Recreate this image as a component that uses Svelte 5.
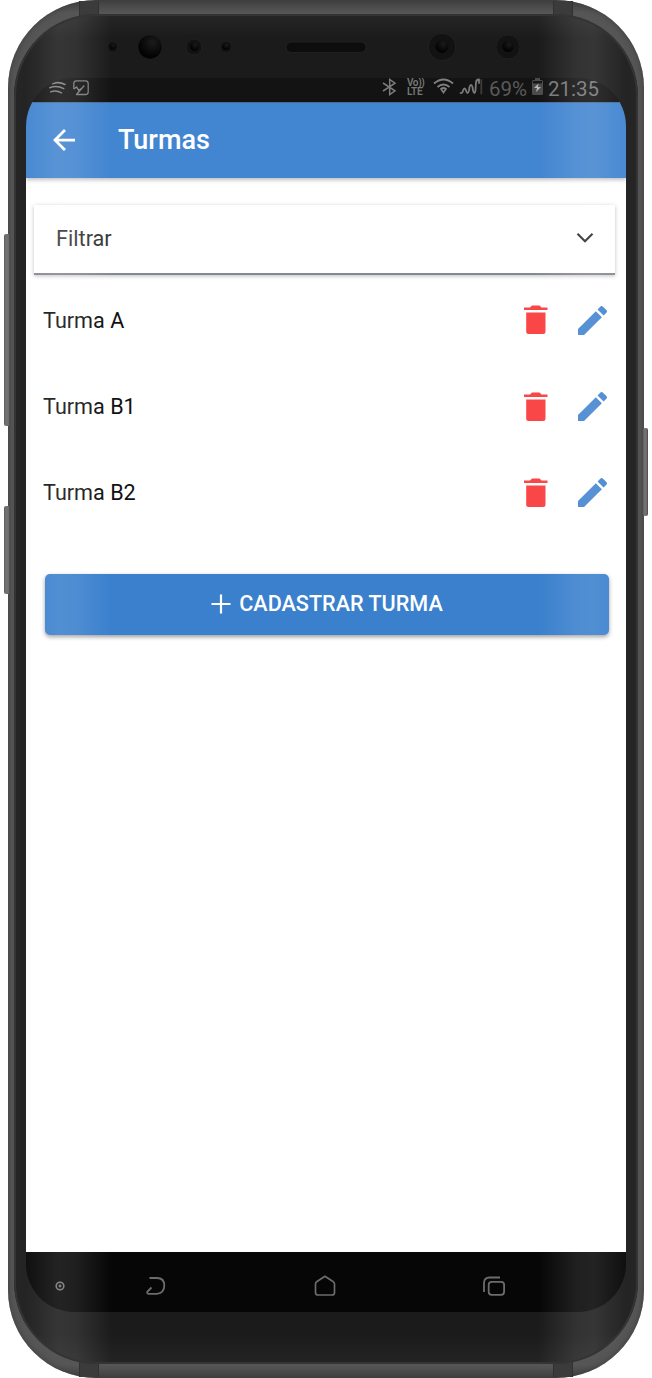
<script>
  const classes = ['Turma A', 'Turma B1', 'Turma B2'];
</script>

<div class="stage">
  <i class="key volume"></i>
  <i class="key assistant"></i>
  <i class="key power"></i>
  <div class="phone">
    <i class="band tl"></i><i class="band tr"></i><i class="band bl"></i><i class="band br"></i>
    <div class="bezel">
      <svg class="sensors" width="624" height="64" viewBox="14 14 624 64">
        <defs>
          <radialGradient id="lens" cx=".6" cy=".3" r=".6">
            <stop offset="0" stop-color="#1b1b1b" />
            <stop offset="1" stop-color="#030303" />
          </radialGradient>
        </defs>
        <g fill="#121212" stroke="#252525" stroke-width=".8">
          <circle cx="112.500" cy="47" r="5.500" />
          <circle cx="150" cy="47" r="12" />
          <circle cx="194" cy="47" r="8" />
          <circle cx="226" cy="47" r="6" />
          <rect x="286" y="42" width="80" height="10.500" rx="5.250" fill="#0d0d0d" />
          <circle cx="442" cy="47" r="13.800" />
          <circle cx="508" cy="47" r="12" />
        </g>
        <g fill="url(#lens)">
          <circle cx="112.500" cy="46.500" r="3" />
          <circle cx="150" cy="47" r="11.700" />
          <circle cx="194.500" cy="46.500" r="4.500" />
          <circle cx="226" cy="46.500" r="3.500" />
          <circle cx="442" cy="46.500" r="6.500" />
          <circle cx="508" cy="46.500" r="5.500" />
        </g>
      </svg>

      <div class="screen">
        <div class="status">
          <svg class="waves" width="18" height="17" viewBox="0 0 18 17" fill="none" stroke="#808080" stroke-width="1.500" stroke-linecap="round">
            <path d="M4.500 5.700Q11 3.200 17 6.500M1.800 9.700Q9 6.800 15.700 10.700M2.700 13.900Q8 11.800 13.500 14.800" />
          </svg>
          <svg class="picture" width="16" height="16" viewBox="0 0 16 16" fill="none" stroke="#7b7b7b" stroke-width="1.300" stroke-linejoin="round">
            <path d="M.8 9V3.500Q.8.8 3.500.8H12.500Q15.200.8 15.200 3.500V12Q15.200 14.500 12.500 14.500H3.500L6 11.500 11.300 5.500" />
            <path d="M.8 9 3.500 7 6 10.500 8.500 8.500" />
          </svg>
          <span class="space"></span>
          <svg class="bt" width="15" height="18" viewBox="0 0 15 18" fill="none" stroke="#7b7b7b" stroke-width="1.500">
            <path d="M1 5 13 12.800 7.700 16.500V1.500L13 5.200 1 13" />
          </svg>
          <div class="volte"><span>Vo))</span><span>LTE</span></div>
          <svg class="wifi" width="21" height="17" viewBox="0 0 21 17" fill="none" stroke="#808080" stroke-width="1.900">
            <path d="M1 5.500Q10.500-2.500 20 5.500M4.500 9Q10.500 4 16.500 9" />
            <path d="M8 11Q10.500 9 13 11L10.500 14.500Z" stroke-width="1.700" />
          </svg>
          <svg class="signal" width="24" height="17" viewBox="0 0 24 17" fill="none" stroke="#7a7a7a" stroke-width="1.800" stroke-linecap="round">
            <path d="M1.500 15Q3.500 15.500 4 12.500 5.700 8.500 7 12.500 8.500 17.500 10 12.500L10.500 9Q12 5 13.500 9L14 12.500Q15.500 17.500 16.500 12.500L17 4.500Q17.300 1.300 20 1.500V5" />
            <path d="M22.300 2V15.500" stroke="#3c3c3c" />
          </svg>
          <span class="percent">69%</span>
          <svg class="battery" width="11" height="17" viewBox="0 0 11 17">
            <path fill="#4b4b4b" d="M3 0H8V2H9.500Q11 2 11 3.500V15.500Q11 17 9.500 17H1.500Q0 17 0 15.500V3.500Q0 2 1.500 2H3Z" />
            <path fill="#161616" d="M1 5.500V3H10V5.500Z" />
            <path fill="#b5b5b5" d="M6.500 5.500 2 10H5L4 14 9 9H6Z" />
          </svg>
          <span class="clock">21:35</span>
        </div>

        <header>
          <svg width="22" height="22" viewBox="4 4 16 16"><path fill="#fff" d="M20 11H7.830l5.590-5.590L12 4l-8 8 8 8 1.410-1.410L7.830 13H20z" /></svg>
          <h1>Turmas</h1>
        </header>

        <main>
          <div class="filter">
            <span>Filtrar</span>
            <svg width="18" height="12" viewBox="0 0 18 12" fill="none" stroke="#303030" stroke-width="2.200"><path d="M1.500 1.800 9 9.300 16.500 1.800" /></svg>
          </div>
          <ul>
            {#each classes as name}
              <li>
                <span>{name}</span>
                <svg class="trash" width="24" height="30" viewBox="0 0 24 30" fill="#f94646">
                  <path d="M0 2.500H6L8 .5H15.500L17.500 2.500H23.500V5H0ZM2.200 7.500H21.500V26.500Q21.500 29 19 29H4.800Q2.200 29 2.200 26.500Z" />
                </svg>
                <svg class="pencil" width="29" height="29" viewBox="3 3 18 18" fill="#4284d0">
                  <path d="M3 17.250V21h3.750L17.810 9.940l-3.750-3.750L3 17.250zM20.710 7.040c.39-.39.39-1.020 0-1.410l-2.340-2.340c-.39-.39-1.020-.39-1.410 0l-1.830 1.830 3.750 3.750 1.830-1.830z" />
                </svg>
              </li>
            {/each}
          </ul>
          <button>
            <svg width="20" height="20" viewBox="0 0 20 20" fill="none" stroke="#fff" stroke-width="2.200"><path d="M10 .5V19.500M.5 10H19.500" /></svg>
            <span>CADASTRAR TURMA</span>
          </button>
        </main>

        <nav>
          <svg width="10" height="10" viewBox="0 0 10 10"><circle cx="5" cy="5" r="3.800" fill="none" stroke="#777" stroke-width="1.600" /><circle cx="5" cy="5" r="1.400" fill="#777" /></svg>
          <svg class="back" width="20" height="20" viewBox="0 0 20 20" fill="none" stroke="#6c6c6c" stroke-width="1.800"><path d="M3.500 2H11Q18.300 2 18.300 9.500T11 17.800H2.500Q.5 17.800 1.500 15.500L5.500 11.500" /></svg>
          <svg class="home" width="22" height="22" viewBox="0 0 22 22" fill="none" stroke="#6c6c6c" stroke-width="1.700" stroke-linejoin="round"><path d="M11 1.300 19 6.500Q20.500 7.500 20.500 9V17.500Q20.500 20 18 20H4Q1.500 20 1.500 17.500V9Q1.500 7.500 3 6.500Z" /></svg>
          <svg class="recent" width="22" height="20" viewBox="0 0 22 20" fill="none" stroke="#6c6c6c" stroke-width="1.800"><rect x="5.700" y="5.800" width="15.400" height="13" rx="3" /><path d="M1 16V7Q1 1.500 6.500 1.500H17" /></svg>
        </nav>
      </div>
      <div class="glare"></div>
    </div>
  </div>
</div>

<style>
  :global(body) { background: #fff; overflow: hidden; }
  * { box-sizing: border-box; }
  svg { display: block; flex: none; }
  .stage { position: relative; width: 652px; height: 1378px; padding: 0 8px; font-family: Roboto, sans-serif; }
  .key { position: absolute; width: 6px; border-radius: 2px; background: linear-gradient(90deg, #5c5c5c, #757575 35%, #6c6c6c 75%, #414141); z-index: 1; }
  .volume { left: 4px; top: 234px; height: 192px; }
  .assistant { left: 4px; top: 506px; height: 88px; }
  .power { left: 643px; top: 428px; height: 88px; width: 5px; }
  .phone {
    position: relative; width: 636px; height: 1378px; padding: 14px 6px; border-radius: 88px;
    background: linear-gradient(180deg, #414141, #565656 13px, #565656 1365px, #414141);
    box-shadow: inset 0 0 6px #3b3b3b;
  }
  .band { position: absolute; width: 20px; height: 16px; background: #3b3b3b; border: solid #313131; border-width: 0 1px; }
  .tl, .bl { left: 71px; }
  .tr, .br { right: 71px; }
  .tl, .tr { top: 1px; }
  .bl, .br { bottom: 1px; }
  .bezel {
    position: relative; width: 624px; height: 1350px; overflow: hidden; border-radius: 82px;
    background: linear-gradient(180deg, #262626, #1b1b1b 24px, #1b1b1b 1320px, #242424);
  }
  .bezel::after { content: ''; position: absolute; inset: 0; border: 2px solid #343434; border-radius: 82px; }
  .screen { display: flex; flex-direction: column; width: 600px; height: 1234px; margin: 0 auto; border-radius: 48px; overflow: hidden; }
  .status { height: 24px; flex: none; display: flex; align-items: flex-start; padding: 0 27px 0 22px; background: #131313; color: #777; }
  .space { flex: 1; }
  .picture { margin: 2px 0 0 7px; }
  .bt { margin-top: 0; }
  .volte { display: flex; flex-direction: column; width: 18px; margin: 1px 0 0 10px; font-size: 10px; line-height: 8.500px; font-weight: 600; letter-spacing: -.4px; }
  .volte span + span { letter-spacing: -.2px; }
  .wifi { margin: 0 0 0 8px; }
  .signal { margin: 0 0 0 5px; }
  .percent { width: 40px; margin-left: 6px; color: #5a5a5a; font-size: 20.500px; line-height: 22px; }
  .battery { margin-left: 3px; }
  .clock { width: 51px; margin-left: 5px; font-size: 20.500px; line-height: 22px; }
  header { position: relative; height: 76px; flex: none; display: flex; align-items: center; gap: 43px; padding: 0 0 1px 27px; background: #4285d0; border-top: 1px solid #456b98; box-shadow: 0 2px 4px #0004; }
  h1 { margin: 0; font-size: 27px; line-height: 32px; font-weight: 500; color: #fff; }
  main { flex: 1; padding: 27px 11px 0 8px; background: #fff; }
  .filter { display: flex; align-items: center; justify-content: space-between; height: 70px; padding: 0 21px 2px 22px; border-bottom: 2px solid #858991; color: #353535; font-size: 21.700px; box-shadow: 0 1px 4px #0004; }
  ul { list-style: none; margin: 2px 0 0; padding: 0; }
  li { display: flex; align-items: center; height: 86.400px; padding: 0 8px 0 9px; color: #111; font-size: 21.600px; }
  li span { flex: 1; }
  .pencil { margin-left: 30px; }
  button { display: flex; align-items: center; justify-content: center; gap: 8px; width: 564px; height: 61px; margin: 37.800px 0 0 11px; padding: 0; border: 0; border-radius: 5px; background: #3a80cd; color: #fff; font: 500 21.600px Roboto, sans-serif; box-shadow: 0 2px 4px #0006; }
  button span { padding-bottom: 2px; }
  nav { height: 60px; flex: none; display: flex; align-items: center; padding: 8px 0 0 29px; background: #060606; }
  .back { margin-left: 81px; }
  .home { margin-left: 148px; }
  .recent { margin-left: 147px; }
  .glare {
    position: absolute; inset: 0; pointer-events: none;
    background: linear-gradient(90deg, #ffffff0c, #ffffff0a 12px, #ffffff1e 44px, #ffffff1a 62px, #fff0 98px, #fff0 524px, #ffffff1a 562px, #ffffff1e 580px, #ffffff0a 612px, #ffffff0c);
  }
</style>
